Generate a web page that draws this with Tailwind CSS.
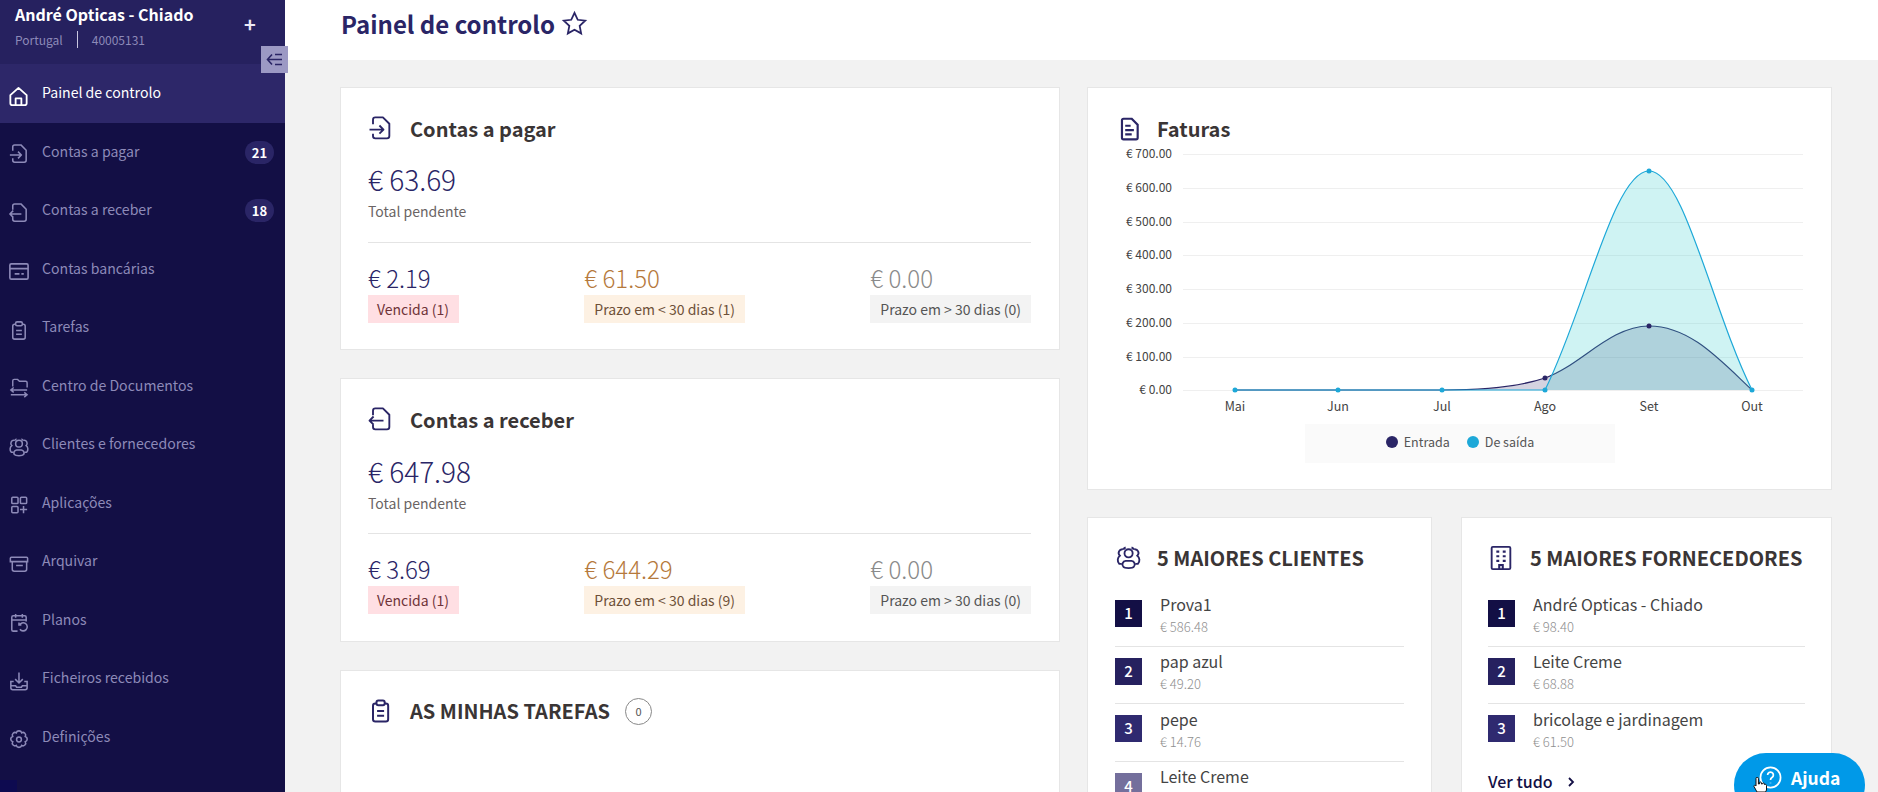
<!DOCTYPE html>
<html lang="pt">
<head>
<meta charset="utf-8">
<script src="https://cdn.jsdelivr.net/npm/@tailwindcss/browser@4"></script>
<title>Painel de controlo</title>
</head>
<body class="m-0">
<svg width="0" height="0" class="absolute">
  <symbol id="i-home" viewBox="0 0 24 24"><path d="M3.500 10.500 12 3l8.500 7.500V19a2 2 0 0 1-2 2h-13a2 2 0 0 1-2-2zM9 21v-7h6v7" stroke-linejoin="round"/></symbol>
  <symbol id="i-in" viewBox="0 0 24 24"><path d="M6 8V4a2 2 0 0 1 2-2h6.500L20 7.500V18a2 2 0 0 1-2 2H8a2 2 0 0 1-2-2v-2M3 12.500h12M11.500 9l3.500 3.500-3.500 3.500" stroke-linejoin="round"/></symbol>
  <symbol id="i-out" viewBox="0 0 24 24"><path d="M6 8V4a2 2 0 0 1 2-2h6.500L20 7.500V18a2 2 0 0 1-2 2H8a2 2 0 0 1-2-2v-2M15 12.500H3M6.500 9 3 12.500 6.500 16" stroke-linejoin="round"/></symbol>
  <symbol id="i-card" viewBox="0 0 24 24"><rect x="3" y="4" width="19" height="16" rx="1.500"/><path d="M3 9h19M8 14.500h5M15 14.500h2.500"/></symbol>
  <symbol id="i-clip" viewBox="0 0 24 24"><path d="M9 5.500H8a2 2 0 0 0-2 2V19a2 2 0 0 0 2 2h9a2 2 0 0 0 2-2V7.500a2 2 0 0 0-2-2h-1"/><rect x="9" y="3" width="7" height="4" rx="1.500"/><path d="M9.500 12h6M9.500 16h6"/></symbol>
  <symbol id="i-folder" viewBox="0 0 24 24"><path d="M6 10V4a1.500 1.500 0 0 1 1.500-1.500H11l2 2h6.500A1.500 1.500 0 0 1 21 6v5M4 13.500h17M7 11l-3 2.500L7 16M4 18.500h17M18 16l3 2.500-3 2.500"/></symbol>
  <symbol id="i-users" viewBox="0 0 24 24"><circle cx="12.500" cy="8" r="3.500"/><path d="M8 19.500a3 3 0 0 1 2-5h5a3 3 0 0 1 2 5c-1 1.500-8 1.500-9 0zM8 5a3 3 0 0 1 2-2M17 5a3 3 0 0 0-2-2M7.500 4.500a3.200 3.200 0 0 0-2.500 5.500C3 11.500 2.500 15 4.500 17h2M17.500 4.500a3.200 3.200 0 0 1 2.500 5.500c2 1.500 2.500 5 .5 7h-2"/></symbol>
  <symbol id="i-apps" viewBox="0 0 24 24"><rect x="5" y="3.500" width="6.500" height="6.500" rx="1"/><rect x="14" y="3.500" width="6.500" height="6.500" rx="1"/><rect x="5" y="13" width="6.500" height="6.500" rx="1"/><path d="M17.250 12.500v7.500M13.500 16.250h7.500"/></symbol>
  <symbol id="i-arch" viewBox="0 0 24 24"><path d="M3.500 5.500a1 1 0 0 1 1-1h16a1 1 0 0 1 1 1V9h-18zM5.500 9v8a2 2 0 0 0 2 2h11a2 2 0 0 0 2-2V9M9.500 13h7"/></symbol>
  <symbol id="i-cal" viewBox="0 0 24 24"><path d="M11 21H6.500a1.500 1.500 0 0 1-1.500-1.500V6.500A1.500 1.500 0 0 1 6.500 5h12A1.500 1.500 0 0 1 20 6.500V11M9 3v4M16 3v4M5 9.500h15"/><path d="M15 14.500h-2.500V12M13 15a4.200 4.200 0 1 1 .5 4"/></symbol>
  <symbol id="i-tray" viewBox="0 0 24 24"><path d="M12.500 2.500v10.500M8.500 9.500l4 4 4-4M7 12H4v6.500a2 2 0 0 0 2 2h13a2 2 0 0 0 2-2V12h-3M4 16.500h5l1 1.500h5l1-1.500h5"/></symbol>
  <symbol id="i-gear" viewBox="0 0 24 24"><path d="M12.500 3c1.500 0 2.500 1 2.800 2 1-.6 2.300-.5 3.300.5s1.100 2.300.5 3.300c1 .3 2 1.300 2 2.800s-1 2.500-2 2.800c.6 1 .5 2.300-.5 3.300s-2.300 1.100-3.300.5c-.3 1-1.300 2-2.800 2s-2.500-1-2.800-2c-1 .6-2.300.5-3.300-.5s-1.100-2.300-.5-3.300c-1-.3-2-1.300-2-2.800s1-2.500 2-2.800c-.6-1-.5-2.300.5-3.300s2.300-1.100 3.300-.5C10 4 11 3 12.500 3z"/><circle cx="12.500" cy="12" r="2.500"/></symbol>
</svg>

<div class="relative flex h-[792px] w-[1878px] overflow-hidden bg-[#f2f2f2] font-['Noto_Sans_CJK_JP','Noto_Sans',sans-serif]">

  <!-- Sidebar -->
  <aside class="relative flex w-[285px] shrink-0 flex-col bg-[#130f45]">
    <div class="relative h-[64px] bg-[#26215f] pl-[15px] pt-[2px]">
      <div class="text-[16px] leading-[24px] font-bold text-white">André Opticas - Chiado</div>
      <div class="mt-[5px] flex h-[17px] items-center text-[12px] leading-[17px] text-[#8d8ab8]">
        <span>Portugal</span>
        <span class="mx-[14px] h-[17px] w-px bg-[#c9c7e0]"></span>
        <span>40005131</span>
      </div>
      <span class="absolute left-[244px] top-[14px] text-[20px] leading-[20px] font-bold text-[#eceaf6]">+</span>
    </div>
    <a class="flex h-[59px] items-center gap-[12px] bg-[#2d2769] pl-[7px] text-[14.1px] text-white">
      <svg class="mt-[5px] size-[23px] fill-none stroke-white stroke-[1.9]"><use href="#i-home"/></svg><span class="-mt-[1px]">Painel de controlo</span>
    </a>
    <nav class="flex flex-col text-[14.1px] text-[#8d8ab8]">
      <a class="flex h-[58.5px] items-center gap-[12px] pl-[7px] pr-[11px]"><svg class="mt-[5px] size-[23px] fill-none stroke-[#8d8ab8] stroke-[1.6]"><use href="#i-in"/></svg><span class="-mt-[2px] flex-1">Contas a pagar</span><span class="flex h-[23px] w-[29px] items-center justify-center rounded-full bg-[#2a2566] text-[13px] font-bold text-white">21</span></a>
      <a class="flex h-[58.5px] items-center gap-[12px] pl-[7px] pr-[11px]"><svg class="mt-[5px] size-[23px] fill-none stroke-[#8d8ab8] stroke-[1.6]"><use href="#i-out"/></svg><span class="-mt-[2px] flex-1">Contas a receber</span><span class="flex h-[23px] w-[29px] items-center justify-center rounded-full bg-[#2a2566] text-[13px] font-bold text-white">18</span></a>
      <a class="flex h-[58.5px] items-center gap-[12px] pl-[7px]"><svg class="mt-[5px] size-[23px] fill-none stroke-[#8d8ab8] stroke-[1.7]"><use href="#i-card"/></svg><span class="-mt-[2px]">Contas bancárias</span></a>
      <a class="flex h-[58.5px] items-center gap-[12px] pl-[7px]"><svg class="mt-[5px] size-[23px] fill-none stroke-[#8d8ab8] stroke-[1.6]"><use href="#i-clip"/></svg><span class="-mt-[2px]">Tarefas</span></a>
      <a class="flex h-[58.5px] items-center gap-[12px] pl-[7px]"><svg class="mt-[5px] size-[23px] fill-none stroke-[#8d8ab8] stroke-[1.5]"><use href="#i-folder"/></svg><span class="-mt-[2px]">Centro de Documentos</span></a>
      <a class="flex h-[58.5px] items-center gap-[12px] pl-[7px]"><svg class="mt-[5px] size-[23px] fill-none stroke-[#8d8ab8] stroke-[1.6]"><use href="#i-users"/></svg><span class="-mt-[2px]">Clientes e fornecedores</span></a>
      <a class="flex h-[58.5px] items-center gap-[12px] pl-[7px]"><svg class="mt-[5px] size-[23px] fill-none stroke-[#8d8ab8] stroke-[1.6]"><use href="#i-apps"/></svg><span class="-mt-[2px]">Aplicações</span></a>
      <a class="flex h-[58.5px] items-center gap-[12px] pl-[7px]"><svg class="mt-[5px] size-[23px] fill-none stroke-[#8d8ab8] stroke-[1.6]"><use href="#i-arch"/></svg><span class="-mt-[2px]">Arquivar</span></a>
      <a class="flex h-[58.5px] items-center gap-[12px] pl-[7px]"><svg class="mt-[5px] size-[23px] fill-none stroke-[#8d8ab8] stroke-[1.6]"><use href="#i-cal"/></svg><span class="-mt-[2px]">Planos</span></a>
      <a class="flex h-[58.5px] items-center gap-[12px] pl-[7px]"><svg class="mt-[5px] size-[23px] fill-none stroke-[#8d8ab8] stroke-[1.6]"><use href="#i-tray"/></svg><span class="-mt-[2px]">Ficheiros recebidos</span></a>
      <a class="flex h-[58.5px] items-center gap-[12px] pl-[7px]"><svg class="mt-[5px] size-[23px] fill-none stroke-[#8d8ab8] stroke-[1.6]"><use href="#i-gear"/></svg><span class="-mt-[2px]">Definições</span></a>
    </nav>
    <span class="absolute bottom-0 left-0 h-[12px] w-[17px] bg-[#0d0a50]"></span>
    <button class="absolute left-[261px] top-[46px] flex size-[27px] items-center justify-center bg-[#9c99c4]">
      <svg class="size-[17px] fill-none stroke-[#2a2566] stroke-[1.6]" viewBox="0 0 17 17"><path d="M6 3.500 1.500 8.500 6 13.500M1.500 8.500H16M9 3.500h7M9 13.500h7"/></svg>
    </button>
  </aside>

  <!-- Main -->
  <main class="min-w-0 flex-1">
    <header class="flex h-[60px] items-start gap-[6px] bg-white pl-[56px] pt-[7px]">
      <h1 class="text-[24px] leading-[34px] font-bold text-[#2a2566]">Painel de controlo</h1>
      <svg class="mt-[3px] size-[27px] fill-none stroke-[#2a2566] stroke-[1.6]" viewBox="0 0 24 24"><path d="m12 2.500 2.900 6.200 6.600.8-4.900 4.600 1.300 6.700L12 17.500l-5.900 3.300 1.300-6.700L2.500 9.500l6.600-.8z"/></svg>
    </header>

    <div class="flex gap-[27px] pl-[55px] pt-[27px]">
      <!-- Left column -->
      <div class="flex w-[720px] shrink-0 flex-col gap-[28px]">
        <section class="h-[263px] border border-[#e6e6e6] bg-white pl-[27px] pr-[28px] pt-[27px]">
          <div class="flex h-[28px] items-center gap-[16px]">
            <svg class="-ml-[2px] size-[28px] fill-none stroke-[#2a2566] stroke-[1.6]"><use href="#i-in"/></svg>
            <h2 class="text-[20px] leading-[28px] font-bold text-[#3a3535]">Contas a pagar</h2>
          </div>
          <div class="mt-[18px] text-[28px] leading-[36px] font-light text-[#2a2566]">€ 63.69</div>
          <div class="mt-[4px] text-[14px] leading-[20px] text-[#6a6464]">Total pendente</div>
          <div class="mt-[21px] h-px bg-[#e4e4e4]"></div>
          <div class="mt-[20px] flex justify-between">
            <div><div class="text-[24px] leading-[30px] font-light text-[#2a2566]">€ 2.19</div><div class="mt-[2px] flex h-[28px] items-center bg-[#ffdfe3] pl-[9px] pr-[10px] text-[14px] text-[#6e3338]">Vencida (1)</div></div>
            <div><div class="text-[24px] leading-[30px] font-light text-[#b5793c]">€ 61.50</div><div class="mt-[2px] flex h-[28px] items-center bg-[#fdf1e3] px-[10px] text-[14px] text-[#6e5038]">Prazo em &lt; 30 dias (1)</div></div>
            <div><div class="text-[24px] leading-[30px] font-light text-[#8a8a8a]">€ 0.00</div><div class="mt-[2px] flex h-[28px] items-center bg-[#f3f3f3] px-[10px] text-[14px] text-[#555]">Prazo em &gt; 30 dias (0)</div></div>
          </div>
        </section>

        <section class="h-[264px] border border-[#e6e6e6] bg-white pl-[27px] pr-[28px] pt-[27px]">
          <div class="flex h-[28px] items-center gap-[16px]">
            <svg class="-ml-[2px] size-[28px] fill-none stroke-[#2a2566] stroke-[1.6]"><use href="#i-out"/></svg>
            <h2 class="text-[20px] leading-[28px] font-bold text-[#3a3535]">Contas a receber</h2>
          </div>
          <div class="mt-[19px] text-[28px] leading-[36px] font-light text-[#2a2566]">€ 647.98</div>
          <div class="mt-[4px] text-[14px] leading-[20px] text-[#6a6464]">Total pendente</div>
          <div class="mt-[20px] h-px bg-[#e4e4e4]"></div>
          <div class="mt-[20px] flex justify-between">
            <div><div class="text-[24px] leading-[30px] font-light text-[#2a2566]">€ 3.69</div><div class="mt-[2px] flex h-[28px] items-center bg-[#ffdfe3] pl-[9px] pr-[10px] text-[14px] text-[#6e3338]">Vencida (1)</div></div>
            <div><div class="text-[24px] leading-[30px] font-light text-[#b5793c]">€ 644.29</div><div class="mt-[2px] flex h-[28px] items-center bg-[#fdf1e3] px-[10px] text-[14px] text-[#6e5038]">Prazo em &lt; 30 dias (9)</div></div>
            <div><div class="text-[24px] leading-[30px] font-light text-[#8a8a8a]">€ 0.00</div><div class="mt-[2px] flex h-[28px] items-center bg-[#f3f3f3] px-[10px] text-[14px] text-[#555]">Prazo em &gt; 30 dias (0)</div></div>
          </div>
        </section>

        <section class="h-[200px] border border-[#e6e6e6] bg-white pl-[27px] pr-[28px] pt-[26px]">
          <div class="flex h-[28px] items-center gap-[16px]">
            <svg class="-ml-[2px] size-[28px] fill-none stroke-[#2a2566] stroke-[1.7]"><use href="#i-clip"/></svg>
            <h2 class="text-[20px] leading-[28px] font-bold text-[#3a3535]">AS MINHAS TAREFAS</h2>
            <span class="-ml-[1px] flex size-[27px] items-center justify-center rounded-full border border-[#888] text-[11px] text-[#555]">0</span>
          </div>
        </section>
      </div>

      <!-- Right column -->
      <div class="flex w-[745px] shrink-0 flex-col gap-[27px]">
        <section class="relative h-[403px] border border-[#e6e6e6] bg-white">
          <div class="mt-[27px] flex h-[28px] items-center gap-[15px] pl-[28px]">
            <svg class="size-[26px] fill-[#2a2566]" viewBox="0 0 24 24"><path fill-rule="evenodd" d="M7 1.500h8l6 6V20a2.500 2.500 0 0 1-2.500 2.500H7A2.500 2.500 0 0 1 4.500 20V4A2.500 2.500 0 0 1 7 1.500zm0 2a.500.500 0 0 0-.5.500v16a.500.500 0 0 0 .5.500h11.500a.500.500 0 0 0 .5-.5V8.500L14 3.500zM8.500 8h5v2h-5zm0 4h8v2h-8zm0 4h6v2h-6z"/></svg>
            <h2 class="text-[20px] leading-[28px] font-bold text-[#3a3535]">Faturas</h2>
          </div>
          <svg class="mt-[2px] block w-full" height="280" viewBox="1088 145 743 280">
            <g stroke="#efefef" stroke-width="1">
              <path d="M1183 154.500h620M1183 188.500h620M1183 222.500h620M1183 255.500h620M1183 289.500h620M1183 323.500h620M1183 357.500h620M1183 390.500h620"/>
            </g>
            <g font-size="12" fill="#444" text-anchor="end" font-family="'Noto Sans CJK JP'">
              <text x="1172" y="158">€ 700.00</text><text x="1172" y="192">€ 600.00</text><text x="1172" y="226">€ 500.00</text><text x="1172" y="259">€ 400.00</text><text x="1172" y="293">€ 300.00</text><text x="1172" y="327">€ 200.00</text><text x="1172" y="361">€ 100.00</text><text x="1172" y="394">€ 0.00</text>
            </g>
            <g font-size="12.500" fill="#444" text-anchor="middle" font-family="'Noto Sans CJK JP'">
              <text x="1235" y="411">Mai</text><text x="1338" y="411">Jun</text><text x="1442" y="411">Jul</text><text x="1545" y="411">Ago</text><text x="1649" y="411">Set</text><text x="1752" y="411">Out</text>
            </g>
            <path d="M1235 390H1442C1480 390 1515 388 1545 378C1580 366 1610 326 1649 326C1690 326 1720 360 1752 390Z" fill="#2a2566" fill-opacity=".2"/>
            <path d="M1235 390H1442C1480 390 1515 388 1545 378C1580 366 1610 326 1649 326C1690 326 1720 360 1752 390" fill="none" stroke="#2a2566" stroke-width="1.200"/>
            <path d="M1545 390C1585 310 1614 171 1649 171C1684 171 1712 310 1752 390Z" fill="#3fd0d0" fill-opacity=".25"/>
            <path d="M1235 390H1545C1585 310 1614 171 1649 171C1684 171 1712 310 1752 390" fill="none" stroke="#1da8d8" stroke-width="1.200"/>
            <g fill="#2a2566"><circle cx="1545" cy="378" r="2.500"/><circle cx="1649" cy="326" r="2.500"/></g>
            <g fill="#1da8d8"><circle cx="1235" cy="390" r="2.500"/><circle cx="1338" cy="390" r="2.500"/><circle cx="1442" cy="390" r="2.500"/><circle cx="1545" cy="390" r="2.500"/><circle cx="1649" cy="171" r="2.500"/><circle cx="1752" cy="390" r="2.500"/></g>
          </svg>
          <div class="absolute left-[217px] top-[336px] flex h-[39px] w-[310px] items-center justify-center gap-[9px] bg-[#fafafa] pb-[3px] text-[12.5px] text-[#555]">
            <span class="flex items-center gap-[6px]"><span class="size-[12px] rounded-full bg-[#2a2566]"></span>Entrada</span>
            <span class="ml-[8px] flex items-center gap-[6px]"><span class="size-[12px] rounded-full bg-[#1da8d8]"></span>De saída</span>
          </div>
        </section>

        <div class="flex gap-[29px]">
          <section class="h-[320px] w-[345px] border border-[#e6e6e6] bg-white px-[27px]">
            <div class="mt-[26px] flex h-[28px] items-center gap-[15px]">
              <svg class="-ml-[1px] size-[28px] shrink-0 fill-none stroke-[#2a2566] stroke-[1.6]"><use href="#i-users"/></svg>
              <h2 class="whitespace-nowrap text-[20px] leading-[28px] font-bold text-[#3a3535]">5 MAIORES CLIENTES</h2>
            </div>
            <ul class="mt-[17px]">
              <li class="flex h-[57.5px] gap-[18px] border-b border-[#e4e4e4] pt-[2.5px]"><span class="mt-[8.5px] flex size-[27px] shrink-0 items-center justify-center bg-[#130f45] text-[15px] font-medium text-white">1</span><div><div class="text-[16px] leading-[24px] text-[#444]">Prova1</div><div class="mt-[1px] text-[13px] leading-[20px] font-light text-[#8f8f8f]">€ 586.48</div></div></li>
              <li class="flex h-[57.5px] gap-[18px] border-b border-[#e4e4e4] pt-[2.5px]"><span class="mt-[8.5px] flex size-[27px] shrink-0 items-center justify-center bg-[#26215f] text-[15px] font-medium text-white">2</span><div><div class="text-[16px] leading-[24px] text-[#444]">pap azul</div><div class="mt-[1px] text-[13px] leading-[20px] font-light text-[#8f8f8f]">€ 49.20</div></div></li>
              <li class="flex h-[57.5px] gap-[18px] border-b border-[#e4e4e4] pt-[2.5px]"><span class="mt-[8.5px] flex size-[27px] shrink-0 items-center justify-center bg-[#2f2a70] text-[15px] font-medium text-white">3</span><div><div class="text-[16px] leading-[24px] text-[#444]">pepe</div><div class="mt-[1px] text-[13px] leading-[20px] font-light text-[#8f8f8f]">€ 14.76</div></div></li>
              <li class="flex h-[57.5px] gap-[18px] pt-[2.5px]"><span class="mt-[8.5px] flex size-[27px] shrink-0 items-center justify-center bg-[#746f9c] text-[15px] font-medium text-white">4</span><div><div class="text-[16px] leading-[24px] text-[#444]">Leite Creme</div></div></li>
            </ul>
          </section>

          <section class="h-[320px] w-[371px] border border-[#e6e6e6] bg-white px-[26px]">
            <div class="mt-[26px] flex h-[28px] items-center gap-[15px]">
              <svg class="-ml-[1px] size-[28px] shrink-0 fill-none stroke-[#2a2566] stroke-[1.6]" viewBox="0 0 24 24"><rect x="4" y="2.500" width="16" height="19" rx="1"/><path d="M8 6.500h2.500M13.500 6.500H16M8 10.500h2.500M13.500 10.500H16M8 14.500h2.500M13.500 14.500H16M10.500 21.500V18h3v3.500" stroke-width="1.800"/></svg>
              <h2 class="whitespace-nowrap text-[20px] leading-[28px] font-bold text-[#3a3535]">5 MAIORES FORNECEDORES</h2>
            </div>
            <ul class="mt-[17px]">
              <li class="flex h-[57.5px] gap-[18px] border-b border-[#e4e4e4] pt-[2.5px]"><span class="mt-[8.5px] flex size-[27px] shrink-0 items-center justify-center bg-[#130f45] text-[15px] font-medium text-white">1</span><div><div class="text-[16px] leading-[24px] text-[#444]">André Opticas - Chiado</div><div class="mt-[1px] text-[13px] leading-[20px] font-light text-[#8f8f8f]">€ 98.40</div></div></li>
              <li class="flex h-[57.5px] gap-[18px] border-b border-[#e4e4e4] pt-[2.5px]"><span class="mt-[8.5px] flex size-[27px] shrink-0 items-center justify-center bg-[#26215f] text-[15px] font-medium text-white">2</span><div><div class="text-[16px] leading-[24px] text-[#444]">Leite Creme</div><div class="mt-[1px] text-[13px] leading-[20px] font-light text-[#8f8f8f]">€ 68.88</div></div></li>
              <li class="flex h-[57.5px] gap-[18px] pt-[2.5px]"><span class="mt-[8.5px] flex size-[27px] shrink-0 items-center justify-center bg-[#2f2a70] text-[15px] font-medium text-white">3</span><div><div class="text-[16px] leading-[24px] text-[#444]">bricolage e jardinagem</div><div class="mt-[1px] text-[13px] leading-[20px] font-light text-[#8f8f8f]">€ 61.50</div></div></li>
            </ul>
            <a class="mt-[7px] flex items-center gap-[13px] text-[16px] leading-[24px] font-medium text-[#130f45]">Ver tudo
              <svg class="mt-[3px] size-[10px] fill-none stroke-[#130f45] stroke-[1.8]" viewBox="0 0 10 10"><path d="m3 1 4 4-4 4"/></svg>
            </a>
          </section>
        </div>
      </div>
    </div>
  </main>

  <!-- Help button -->
  <button class="absolute left-[1734px] top-[753px] flex h-[64px] w-[131px] items-start gap-[9px] rounded-full bg-[#0099e8] pl-[25px] pt-[13px] text-[17.5px] leading-[24px] font-bold text-white">
    <svg class="size-[23px] fill-none stroke-white stroke-[1.8]" viewBox="0 0 24 24"><circle cx="12" cy="12" r="10.500"/><path d="M9 9.500a3 3 0 1 1 4.500 2.600c-1 .6-1.500 1.200-1.500 2.400M12 17.500v.5"/></svg>
    Ajuda
  </button>
  <svg class="absolute left-[1753px] top-[777px] h-[15px] w-[15px]" viewBox="0 0 15 15"><path d="M3 1.500a1.200 1.200 0 0 1 2.400 0V7h1V6a1 1 0 0 1 2 0v1h1a1 1 0 0 1 2 0v.5h.6a1 1 0 0 1 1.500 1V13l-1 2H4L1 9.500c-.5-1 1-1.800 2-.5z" fill="#fff" stroke="#111" stroke-width="1"/></svg>
</div>
</body>
</html>
